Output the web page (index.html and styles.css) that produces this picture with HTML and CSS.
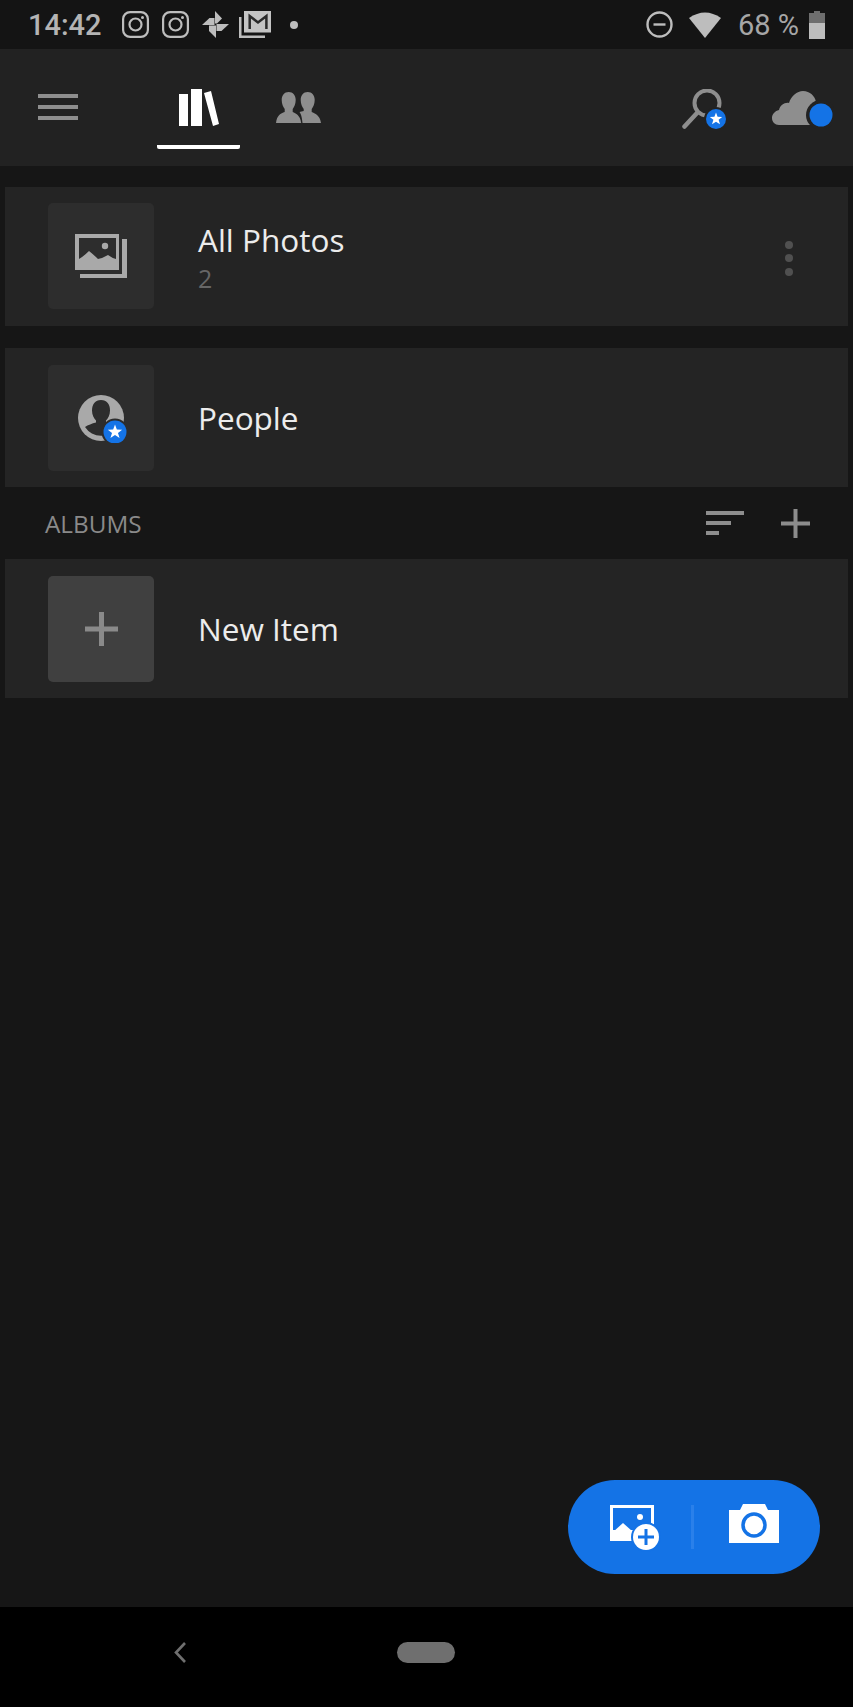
FILE: index.html
```html
<!DOCTYPE html>
<html lang="en">
<head>
    <meta charset="UTF-8">
    <meta name="viewport" content="width=device-width, initial-scale=1.0">
    <title>Library</title>
    <link rel="stylesheet" href="styles.css">
</head>
<body>
    <div class="page">
        <div class="status-bar">
            <span class="clock">14:42</span>
            <div class="status-icons">
                <svg width="27" height="27" viewBox="0 0 27 27" fill="none" stroke="#bdbdbd" stroke-width="2.2"><rect x="1.1" y="1.1" width="24.8" height="24.8" rx="7"/><circle cx="13.5" cy="13.5" r="6"/><circle cx="20.5" cy="6.5" r="1.5" fill="#bdbdbd" stroke="none"/></svg>
                <svg width="27" height="27" viewBox="0 0 27 27" fill="none" stroke="#bdbdbd" stroke-width="2.2"><rect x="1.1" y="1.1" width="24.8" height="24.8" rx="7"/><circle cx="13.5" cy="13.5" r="6"/><circle cx="20.5" cy="6.5" r="1.5" fill="#bdbdbd" stroke="none"/></svg>
                <svg width="27" height="27" viewBox="0 0 27 27" fill="#bdbdbd"><path d="M13 12.500V0l7 7.500-5 5z"/><path d="M14.500 13H27l-7.500 7h-5z"/><path d="M14 14.500V27l-7-7v-5.500z"/><path d="M12.500 14H0l7.500-7h5z"/></svg>
                <svg class="mail-icon" width="32" height="27" viewBox="0 0 32 27"><path d="M0 6h2.500v18.500H26V27H0z" fill="#bdbdbd"/><path d="M5 0h27v21.500H5z" fill="#c4c4c4"/><path d="M10.700 18V5l8.300 6.500L27.400 5v13" fill="none" stroke="#2a2a2a" stroke-width="2.500"/></svg>
                <span class="status-dot"></span>
            </div>
            <div class="status-right">
                <svg width="27" height="27" viewBox="0 0 27 27" fill="none" stroke="#bdbdbd" stroke-width="2.400"><circle cx="13.500" cy="13.500" r="12"/><path d="M7.500 13.500h12"/></svg>
                <svg class="wifi-icon" width="32" height="26" viewBox="0 0 32 26"><path d="M0 6Q16-5 32 6L16 26z" fill="#bdbdbd"/></svg>
                <span class="battery-text">68 %</span>
                <svg class="battery-icon" width="16" height="28" viewBox="0 0 16 28"><path d="M5 0h6v2h5v10H0V2h5z" fill="#6e6e6e"/><path d="M0 12h16v16H0z" fill="#bdbdbd"/></svg>
            </div>
        </div>

        <div class="top-nav">
            <div class="menu-btn"><span></span><span></span><span></span></div>
            <div class="tab active">
                <svg width="40" height="37" viewBox="0 0 40 37" fill="#fff"><path d="M0 5h9v32H0zM12 0h11v37H12zM25 4l7-2 8 33-6 2z"/></svg>
            </div>
            <div class="tab people-tab">
                <svg width="45" height="32" viewBox="0 0 45 32" fill="#8e8e8e"><path d="M12.700 0c4.300 0 7 3.500 7 8 0 4-1.500 7-3 9v3c3 1.500 7.500 3 8.500 11H0c1-8 4.700-9.500 8.700-11v-3c-1.500-2-3-5-3-9 0-4.500 2.700-8 7-8z"/><path d="M31.700 0c4.300 0 7 3.500 7 8 0 4-1.500 7-3 9v3c3 1.500 8.300 3 9.300 11H26.500c-.5-6-1.500-9-3-11 1 0 3-1 4.200-1v-2c-1.500-2-3-5-3-9 0-4.500 2.700-8 7-8z"/></svg>
            </div>
            <div class="nav-right">
                <svg class="search-icon" width="44" height="40" viewBox="0 0 44 40"><circle cx="25" cy="14" r="12.500" fill="none" stroke="#8e8e8e" stroke-width="4"/><path d="M2.500 37.500L15 24" stroke="#8e8e8e" stroke-width="4.500" stroke-linecap="round"/><circle cx="34" cy="30" r="12" fill="#222"/><circle cx="34" cy="30" r="10" fill="#1473e6"/><polygon transform="translate(34 30)" points="0,-6.500 1.600,-2.200 6.200,-2 2.600,.85 4,5.300 0,2.700 -4,5.300 -2.600,.85 -6.200,-2 -1.600,-2.200" fill="#fff"/></svg>
                <svg class="cloud-icon" width="62" height="40" viewBox="0 0 62 40"><path d="M7 36C3 36 0 33 0 29c0-4 3-7 7-8 1-5 6-8 10-7 2-7 8-12 14-12 7 0 12 5 13 11 5 1 8 6 8 11s-3 12-8 12z" fill="#8e8e8e"/><circle cx="49" cy="26" r="15" fill="#222"/><circle cx="49" cy="26" r="11.500" fill="#1473e6"/></svg>
            </div>
        </div>

        <div class="content">
            <div class="row first">
                <div class="thumb">
                    <svg width="52" height="44" viewBox="0 0 52 44"><path d="M0 0h44v36H0z" fill="#a9a9a9"/><path d="M4 4h37v22H4z" fill="#2d2d2d"/><circle cx="30" cy="12" r="3.200" fill="#a9a9a9"/><path d="M4 25q5-3 10-8 5 4 9 8 5-1 10-4 4 3 8 4v7H4z" fill="#a9a9a9"/><path d="M47 5h5v39H5v-4h42z" fill="#a9a9a9"/></svg>
                </div>
                <div class="row-text">
                    <div class="row-title">All Photos</div>
                    <div class="row-count">2</div>
                </div>
                <div class="kebab"><span></span><span></span><span></span></div>
            </div>

            <div class="row second">
                <div class="thumb">
                    <svg width="52" height="50" viewBox="0 0 52 50"><circle cx="26" cy="25" r="23" fill="#a9a9a9"/><path d="M26 7c6 0 9 4.500 9 10.500 0 4.500-2 8-4 10v2c4 1 8 2.500 11 4.500A19 19 0 0 1 10 34c3-2 7-3.500 11-4.500v-2c-2-2-4-5.500-4-10 0-6 3-10.500 9-10.500z" fill="#2d2d2d"/><circle cx="40" cy="39" r="13.500" fill="#2d2d2d"/><circle cx="40" cy="39" r="11.500" fill="#1473e6"/><polygon transform="translate(40 39) scale(1.150)" points="0,-6.500 1.600,-2.200 6.200,-2 2.600,.85 4,5.300 0,2.700 -4,5.300 -2.600,.85 -6.200,-2 -1.600,-2.200" fill="#fff"/></svg>
                </div>
                <div class="row-text">
                    <div class="row-title">People</div>
                </div>
            </div>

            <div class="section-head">
                <span class="section-title">ALBUMS</span>
                <div class="sort-btn"><span class="w1"></span><span class="w2"></span><span class="w3"></span></div>
                <svg class="add-btn" width="29" height="29" viewBox="0 0 29 29" fill="#8c8c8c"><path d="M12.500 0h4v12.500H29v4H16.500V29h-4V16.500H0v-4h12.500z"/></svg>
            </div>

            <div class="row second">
                <div class="thumb new-thumb">
                    <svg width="33" height="34" viewBox="0 0 33 34" fill="#8a8a8a"><path d="M14 0h5v14.500h14v5H19V34h-5V19.500H0v-5h14z"/></svg>
                </div>
                <div class="row-text">
                    <div class="row-title">New Item</div>
                </div>
            </div>
        </div>

        <div class="fab">
            <svg class="fab-add" width="52" height="50" viewBox="0 0 52 50"><path d="M0 0h44v36H0z" fill="#fff"/><path d="M3 3h38v22H3z" fill="#1473e6"/><circle cx="30" cy="12" r="3" fill="#fff"/><path d="M3 27l10-9 9 8v10H3z" fill="#fff"/><circle cx="36" cy="32" r="15" fill="#1473e6"/><circle cx="36" cy="32" r="13" fill="#fff"/><path d="M34.500 24h3v6.500H44v3h-6.500V40h-3v-6.500H28v-3h6.500z" fill="#1473e6"/></svg>
            <span class="fab-divider"></span>
            <svg class="fab-camera" width="50" height="39" viewBox="0 0 50 39"><path d="M0 6h11l3-6h22l3 6h11v33H0z" fill="#fff"/><circle cx="25" cy="21" r="11" fill="none" stroke="#1473e6" stroke-width="3.500"/></svg>
        </div>

        <div class="nav-bar">
            <svg width="12" height="21" viewBox="0 0 12 21" fill="none" stroke="#6f6f6f" stroke-width="2.600"><path d="M11 1L2 10.500 11 20"/></svg>
            <span class="home-pill"></span>
        </div>
    </div>
</body>
</html>
```

FILE: styles.css
```css
:root {
    --bg: #161616;
    --panel: #242424;
    --thumb: #2d2d2d;
    --blue: #1473e6;
    --grey: #8e8e8e;
}

html, body {
    margin: 0;
    padding: 0;
    background-color: var(--bg);
}

.page {
    position: relative;
    width: 853px;
    height: 1707px;
    display: flex;
    flex-direction: column;
    overflow: hidden;
    font-family: "Open Sans", sans-serif;
}

/* status bar */
.status-bar {
    height: 49px;
    flex: none;
    display: flex;
    align-items: center;
    background-color: #141414;
    color: #b4b4b4;
    font-family: Roboto, sans-serif;
}

.clock {
    margin-left: 28px;
    width: 94px;
    font-size: 29px;
    font-weight: 500;
}

.status-icons {
    display: flex;
    align-items: center;
    gap: 13px;
}

.mail-icon { margin-left: -3px; }

.status-dot {
    width: 8px;
    height: 8px;
    margin-left: 6px;
    border-radius: 50%;
    background-color: #bdbdbd;
}

.status-right {
    margin-left: auto;
    margin-right: 28px;
    display: flex;
    align-items: center;
}

.wifi-icon { margin-left: 16px; }

.battery-text {
    margin-left: 17px;
    font-size: 29px;
    color: #a6a6a6;
}

.battery-icon { margin-left: 10px; }

/* top nav */
.top-nav {
    height: 117px;
    flex: none;
    display: flex;
    align-items: flex-start;
    background-color: #222;
}

.menu-btn {
    width: 40px;
    margin: 45px 0 0 38px;
    display: flex;
    flex-direction: column;
    gap: 7px;
}

.menu-btn span {
    height: 4px;
    background-color: var(--grey);
}

.tab {
    height: 100px;
    display: flex;
    justify-content: center;
    box-sizing: border-box;
}

.tab.active {
    width: 83px;
    margin-left: 79px;
    padding-top: 40px;
    border-bottom: 4px solid #fff;
    border-radius: 0 0 2px 2px;
}

.people-tab {
    margin-left: 36px;
    padding-top: 43px;
}

.nav-right {
    margin-left: auto;
    margin-right: 19px;
    padding-top: 40px;
    display: flex;
    gap: 46px;
}

.search-icon, .cloud-icon { display: block; }

/* rows */
.content {
    flex: 1;
    padding: 21px 5px 0;
}

.row {
    height: 139px;
    box-sizing: border-box;
    padding: 16px 55px 17px 43px;
    display: flex;
    align-items: center;
    background-color: var(--panel);
}

.row.first { margin-bottom: 22px; }
.row.second { padding-top: 17px; padding-bottom: 16px; }

.thumb {
    width: 106px;
    height: 106px;
    flex: none;
    display: flex;
    align-items: center;
    justify-content: center;
    border-radius: 5px;
    background-color: var(--thumb);
}

.new-thumb { background-color: #404040; }

.row-text {
    margin-left: 44px;
    flex: 1;
}

.row-title {
    font-size: 31.5px;
    line-height: 44px;
    color: #ececec;
}

.row-count {
    font-size: 25px;
    line-height: 32px;
    color: #666;
}

.kebab {
    margin-top: 4px;
    display: flex;
    flex-direction: column;
    gap: 5.5px;
}

.kebab span {
    width: 8px;
    height: 8px;
    border-radius: 50%;
    background-color: #505050;
}

.section-head {
    height: 72px;
    display: flex;
    align-items: center;
    padding: 0 38px 0 40px;
}

.section-title {
    font-size: 24.3px;
    color: #8a8a8a;
}

.sort-btn {
    margin-left: auto;
    width: 38px;
    display: flex;
    flex-direction: column;
    gap: 6px;
}

.sort-btn span {
    height: 4px;
    background-color: var(--grey);
}

.sort-btn .w1 { width: 38px; }
.sort-btn .w2 { width: 25px; }
.sort-btn .w3 { width: 13px; }

.add-btn { margin-left: 37px; }

/* floating button */
.fab {
    position: absolute;
    left: 568px;
    top: 1480px;
    width: 252px;
    height: 94px;
    border-radius: 47px;
    background-color: var(--blue);
    display: flex;
    align-items: center;
}

.fab-add {
    margin-left: 42px;
    margin-top: 6px;
}

.fab-divider {
    width: 3px;
    height: 44px;
    margin-left: 29px;
    background-color: #2a80ea;
}

.fab-camera {
    margin-left: 35px;
    margin-bottom: 7px;
}

/* android nav */
.nav-bar {
    height: 100px;
    flex: none;
    display: flex;
    align-items: center;
    padding: 0 0 10px 174px;
    box-sizing: border-box;
    background-color: #000;
}

.home-pill {
    width: 58px;
    height: 21px;
    margin-left: 211px;
    border-radius: 11px;
    background-color: #6f6f6f;
}
```
